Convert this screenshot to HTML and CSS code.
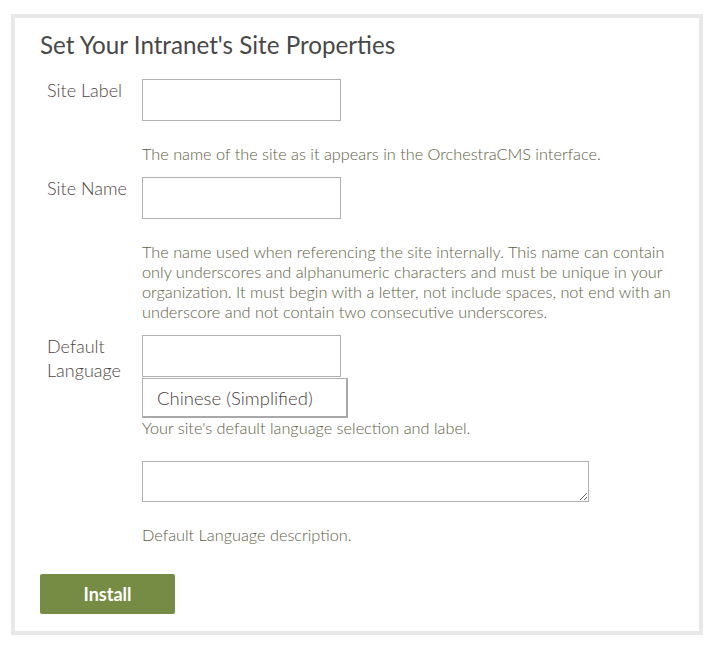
FILE: index.html
```html
<!DOCTYPE html>
<html lang="en">
<head>
<meta charset="utf-8">
<title>Set Your Intranet's Site Properties</title>
<link rel="stylesheet" href="styles.css">
</head>
<body>
<div class="panel">
  <h1 class="title">Set Your Intranet's Site Properties</h1>
  <div class="row">
    <label class="label">Site Label</label>
    <div class="field">
      <input class="text-input" type="text">
      <p class="help first">The name of the site as it appears in the OrchestraCMS interface.</p>
    </div>
  </div>
  <div class="row">
    <label class="label">Site Name</label>
    <div class="field">
      <input class="text-input" type="text">
      <p class="help first">The name used when referencing the site internally. This name can contain only underscores and alphanumeric characters and must be unique in your organization. It must begin with a letter, not include spaces, not end with an underscore and not contain two consecutive underscores.</p>
    </div>
  </div>
  <div class="row">
    <label class="label">Default Language</label>
    <div class="field">
      <input class="text-input" type="text">
      <div class="select">Chinese (Simplified)</div>
      <p class="help">Your site's default language selection and label.</p>
      <textarea class="area"></textarea>
      <p class="help first">Default Language description.</p>
    </div>
  </div>
  <button class="install" type="button">Install</button>
</div>
</body>
</html>
```
FILE: styles.css
```css
html, body {
  margin: 0;
  padding: 0;
  background: #ffffff;
}
body {
  font-family: Lato, "Open Sans", sans-serif;
  color: #555;
}
.panel {
  box-sizing: border-box;
  width: 692px;
  height: 621px;
  margin: 14px 0 0 11px;
  border: 4px solid #e8e8e9;
  padding: 13px 25px 17px 25px;
}
.title {
  margin: 0 0 20px 0;
  font-size: 24.2px;
  line-height: 28px;
  font-weight: 400;
  color: #484848;
}
.row {
  display: grid;
  grid-template-columns: 102px 1fr;
  margin-bottom: 13px;
}
.label {
  padding-left: 7px;
  padding-right: 8px;
  font-size: 18px;
  line-height: 24px;
  font-weight: 300;
  color: #4f4444;
  margin-top: -1px;
}
.field {
  display: flex;
  flex-direction: column;
  align-items: flex-start;
}
.text-input {
  box-sizing: border-box;
  width: 199px;
  height: 42px;
  margin: 0;
  border: 1px solid #b0b0b0;
  background: #fff;
  padding: 0 8px;
  outline: none;
}
.help {
  margin: 0;
  font-size: 16.3px;
  line-height: 20px;
  font-weight: 300;
  color: #5e5e44;
  max-width: 530px;
}
.help.first {
  margin-top: 23px;
}
.select {
  box-sizing: border-box;
  width: 206px;
  height: 40px;
  margin-top: 1px;
  border: 1px solid #b0b0b0;
  border-right: 2px solid #a8a8a8;
  border-bottom: 2px solid #a8a8a8;
  padding: 0 14px;
  font-size: 18.5px;
  line-height: 38px;
  font-weight: 300;
  color: #4a4040;
}
.area {
  box-sizing: border-box;
  width: 447px;
  height: 41px;
  margin: 23px 0 0 0;
  border: 1px solid #b0b0b0;
  resize: both;
  outline: none;
  font-family: inherit;
}
.install {
  display: block;
  margin-top: 29px;
  width: 135px;
  height: 40px;
  border: none;
  border-radius: 2px;
  background: #768c45;
  color: #fff;
  font-family: Lato, sans-serif;
  font-size: 18px;
  font-weight: 700;
  cursor: pointer;
}
```
